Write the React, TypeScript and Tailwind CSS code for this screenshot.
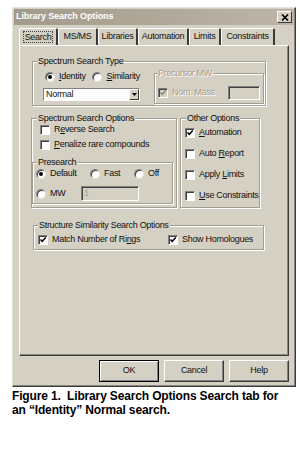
import type { ReactNode } from "react"

function Check({ checked = false, disabled = false }: { checked?: boolean; disabled?: boolean }) {
  return (
    <span
      className={`relative inline-block w-[10px] h-[10px] shrink-0 border border-t-[#808080] border-l-[#808080] border-r-white border-b-white shadow-[inset_1px_1px_0_#404040] ${
        disabled ? "bg-[#d5d0c4]" : "bg-white"
      }`}
    >
      {checked && (
        <svg viewBox="0 0 8 8" className="absolute left-[0px] top-[0px] w-[8px] h-[8px]">
          <path d="M1.5 3.5 L3.2 5.3 L6.8 1.6" fill="none" stroke={disabled ? "#8d897e" : "#000"} strokeWidth="1.5" />
        </svg>
      )}
    </span>
  )
}

function Radio({ checked = false }: { checked?: boolean }) {
  return (
    <span className="relative inline-flex items-center justify-center w-[10px] h-[10px] shrink-0 rounded-full bg-white border border-t-[#808080] border-l-[#808080] border-r-[#e8e4dc] border-b-[#e8e4dc] shadow-[inset_1px_1px_0_#404040]">
      {checked && <span className="w-[4px] h-[4px] rounded-full bg-black" />}
    </span>
  )
}

function Group({
  title,
  className = "",
  legend = "",
  children,
}: {
  title: ReactNode
  className?: string
  legend?: string
  children: ReactNode
}) {
  return (
    <fieldset className={`border border-[#a29e92] shadow-[inset_1px_1px_0_#fff,1px_1px_0_#fff] ${className}`}>
      <legend className={`px-[1px] leading-[11px] whitespace-nowrap bg-[#d5d0c4] ${legend}`}>{title}</legend>
      {children}
    </fieldset>
  )
}

function Row({ children, className = "" }: { children: ReactNode; className?: string }) {
  return <div className={`flex items-center h-[12px] gap-[4px] whitespace-nowrap ${className}`}>{children}</div>
}

const tabs = [
  { label: "Search", w: "w-[39px]" },
  { label: "MS/MS", w: "w-[40px]" },
  { label: "Libraries", w: "w-[40px]" },
  { label: "Automation", w: "w-[51px]" },
  { label: "Limits", w: "w-[32px]" },
  { label: "Constraints", w: "w-[54px]" },
]

export default function App() {
  return (
    <div className="w-[300px] h-[457px] bg-white overflow-hidden font-['Liberation_Sans',Arial,sans-serif] text-[9px] tracking-[-0.3px] text-[#111]">
      {/* dialog */}
      <div className="ml-[12px] mt-[7px] w-[284px] h-[380px] flex flex-col p-[1px] bg-[#d5d0c4] border border-t-[#e6e2d8] border-l-[#e6e2d8] border-r-[#3a3a3a] border-b-[#3a3a3a] shadow-[inset_-1px_-1px_0_#8a867c]">
        <div className="h-[16px] flex items-center justify-between pl-[2px] pr-[2px] bg-gradient-to-r from-[#a29a8a] to-[#bdb6a8]">
          <span className="text-white font-bold tracking-[-0.1px]">Library Search Options</span>
          <span className="w-[15px] h-[12px] flex items-center justify-center bg-[#d5d0c4] border border-t-white border-l-white border-r-[#3a3a3a] border-b-[#3a3a3a]">
            <svg viewBox="0 0 8 7" className="w-[8px] h-[7px]">
              <path d="M1 0.5 L7 6.5 M7 0.5 L1 6.5" stroke="#000" strokeWidth="1.6" />
            </svg>
          </span>
        </div>

        {/* tabs */}
        <div className="mt-[3px] ml-[5px] h-[17px] flex">
          {tabs.map((t, i) => (
            <div
              key={t.label}
              className={`${t.w} h-[17px] flex items-center justify-center whitespace-nowrap border-t border-l border-r-2 border-t-white border-l-white border-r-[#3a3a3a] rounded-t-[2px]`}
            >
              {i === 0 ? (
                <span className="px-[1px] leading-[10px] border border-dotted border-[#444]">{t.label}</span>
              ) : (
                <span>{t.label}</span>
              )}
            </div>
          ))}
        </div>

        {/* panel */}
        <div className="ml-[5px] w-[270px] h-[311px] border border-t-white border-l-white border-r-[#3a3a3a] border-b-[#3a3a3a] shadow-[inset_-1px_-1px_0_#8a867c]">
          <Group title="Spectrum Search Type" className="ml-[12px] mt-[10px] w-[234px] pb-[1px]" legend="ml-[4px]">
            <div className="flex items-start pl-[10px]">
              <div className="w-[97px] pt-[4px]">
                <div className="flex">
                  <Row className="ml-[2px] w-[53px]">
                    <Radio checked />
                    <span>
                      <u>I</u>dentity
                    </span>
                  </Row>
                  <Row>
                    <Radio />
                    <span>
                      <u>S</u>imilarity
                    </span>
                  </Row>
                </div>
                <div className="mt-[5px] w-[97px] h-[13px] flex items-center bg-white border border-t-[#808080] border-l-[#808080] border-r-white border-b-white">
                  <span className="flex-1 pl-[2px]">Normal</span>
                  <span className="w-[10px] h-[11px] flex items-center justify-center bg-[#d5d0c4] border border-t-white border-l-white border-r-[#3a3a3a] border-b-[#3a3a3a]">
                    <svg viewBox="0 0 5 3" className="w-[5px] h-[3px]">
                      <path d="M0 0 H5 L2.5 3 Z" fill="#000" />
                    </svg>
                  </span>
                </div>
              </div>
              <Group
                title="Precursor MW"
                className="ml-[14px] mt-[1px] w-[110px] pb-[3px]"
                legend="ml-[2px] text-[#a29e92] [text-shadow:1px_1px_0_#fff]"
              >
                <div className="flex items-center pl-[3px] pr-[3px] mt-[7px]">
                  <Check checked disabled />
                  <span className="ml-[4px] text-[#a29e92] [text-shadow:1px_1px_0_#fff]">Nom. Mass</span>
                  <span className="ml-auto w-[32px] h-[14px] border border-t-[#808080] border-l-[#808080] border-r-white border-b-white shadow-[inset_1px_1px_0_#404040]" />
                </div>
              </Group>
            </div>
          </Group>

          <div className="flex ml-[11px] mt-[7px]">
            <Group title="Spectrum Search Options" className="w-[146px] pb-[3px]" legend="ml-[5px]">
              <Row className="ml-[8px]">
                <Check />
                <span>
                  R<u>e</u>verse Search
                </span>
              </Row>
              <Row className="ml-[8px] mt-[3px]">
                <Check />
                <span>
                  <u>P</u>enalize rare compounds
                </span>
              </Row>
              <Group title="Presearch" className="mt-[6px] w-[141px] pb-[2px]" legend="ml-[4px]">
                <div className="flex pl-[3px]">
                  <Row className="w-[54px]">
                    <Radio checked />
                    <span>Default</span>
                  </Row>
                  <Row className="w-[44px]">
                    <Radio />
                    <span>Fast</span>
                  </Row>
                  <Row>
                    <Radio />
                    <span>Off</span>
                  </Row>
                </div>
                <div className="flex items-center pl-[3px] mt-[6px] h-[15px] gap-[4px]">
                  <Radio />
                  <span className="w-[27px]">MW</span>
                  <span className="w-[58px] h-[15px] pl-[2px] leading-[13px] text-[#a29e92] border border-t-[#808080] border-l-[#808080] border-r-white border-b-white shadow-[inset_1px_1px_0_#404040]">
                    1
                  </span>
                </div>
              </Group>
            </Group>

            <Group title="Other Options" className="ml-[3px] w-[78px]" legend="ml-[5px]">
              <div className="flex flex-col gap-[9px] pt-[3px] pl-[4px]">
                <Row>
                  <Check checked />
                  <span>
                    <u>A</u>utomation
                  </span>
                </Row>
                <Row>
                  <Check />
                  <span>
                    Auto <u>R</u>eport
                  </span>
                </Row>
                <Row>
                  <Check />
                  <span>
                    Apply <u>L</u>imits
                  </span>
                </Row>
                <Row>
                  <Check />
                  <span>
                    <u>U</u>se Constraints
                  </span>
                </Row>
              </div>
            </Group>
          </div>

          <Group
            title="Structure Similarity Search Options"
            className="ml-[13px] mt-[12px] w-[231px] pb-[3px]"
            legend="ml-[4px]"
          >
            <div className="flex pl-[4px] pt-[3px]">
              <Row className="w-[130px]">
                <Check checked />
                <span>
                  Match Number of Ri<u>n</u>gs
                </span>
              </Row>
              <Row>
                <Check checked />
                <span className="w-[71px] overflow-hidden">Show Homologues</span>
              </Row>
            </div>
          </Group>
        </div>

        {/* buttons */}
        <div className="mt-[4px] ml-[85px] flex gap-[5px]">
          <div className="w-[60px] h-[22px] flex items-center justify-center border border-black shadow-[inset_1px_1px_0_#fff,inset_-1px_-1px_0_#808080]">
            OK
          </div>
          <div className="w-[60px] h-[22px] flex items-center justify-center border border-t-white border-l-white border-r-[#3a3a3a] border-b-[#3a3a3a] shadow-[inset_-1px_-1px_0_#808080]">
            Cancel
          </div>
          <div className="w-[60px] h-[22px] flex items-center justify-center border border-t-white border-l-white border-r-[#3a3a3a] border-b-[#3a3a3a] shadow-[inset_-1px_-1px_0_#808080]">
            Help
          </div>
        </div>
      </div>

      <p className="ml-[12px] mt-[2px] text-[12px] leading-[14px] font-bold tracking-[-0.15px] text-black whitespace-pre">
        {"Figure 1.  Library Search Options Search tab for\nan \u201cIdentity\u201d Normal search."}
      </p>
    </div>
  )
}
